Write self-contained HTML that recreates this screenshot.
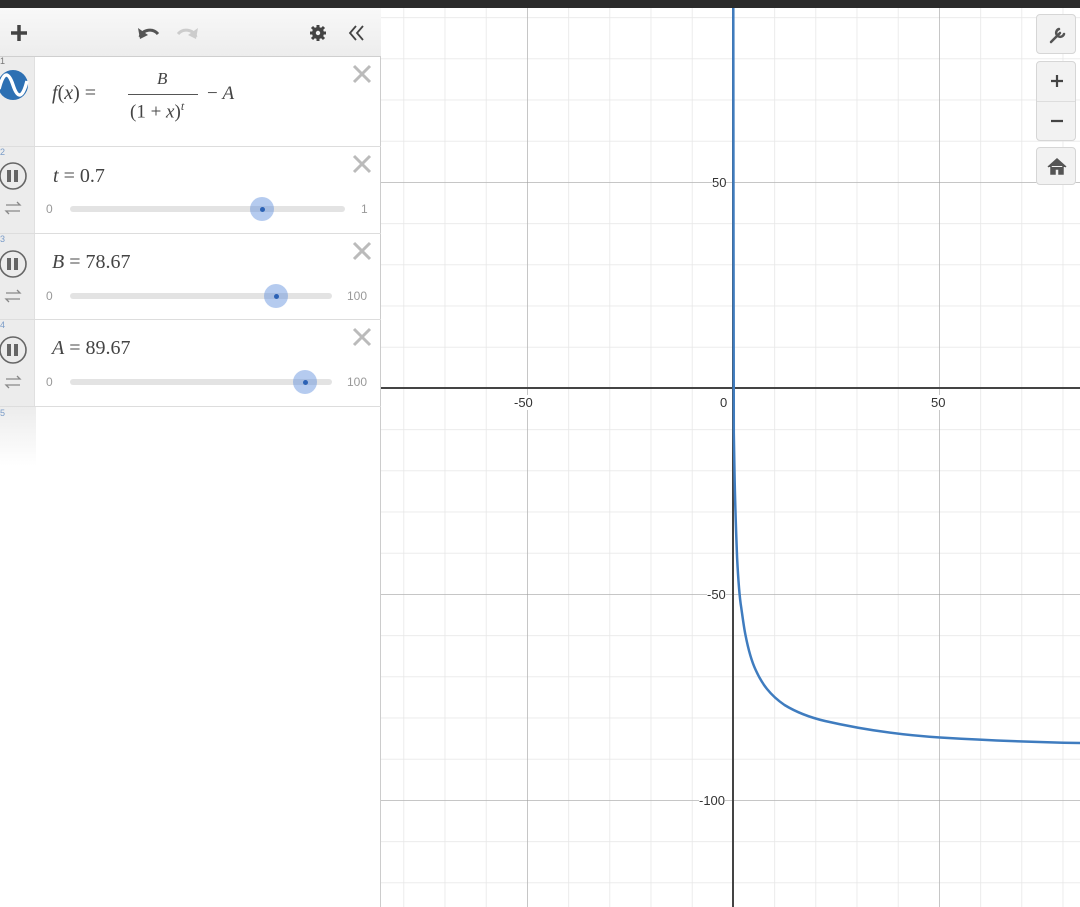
<!DOCTYPE html>
<html><head><meta charset="utf-8"><style>
*{margin:0;padding:0;box-sizing:border-box}
body{width:1080px;height:907px;overflow:hidden;background:#fff;font-family:"Liberation Sans",sans-serif;position:relative}
.top{position:absolute;left:0;top:0;width:1080px;height:8px;background:#2b2b2b}
.panel{position:absolute;left:0;top:8px;width:381px;height:899px;background:#fff;border-right:1px solid #ccc}
.tb{position:absolute;left:0;top:0;width:381px;height:49px;background:linear-gradient(#f8f8f8,#ededed);border-bottom:1px solid #cfcfcf}
.gut{position:absolute;left:0;width:35px;background:#ececec;border-right:1px solid #e0e0e0}
.row{position:absolute;left:0;width:381px;border-bottom:1px solid #ddd}
.math{position:absolute;font-family:"Liberation Serif",serif;font-size:20px;color:#444}
.x{position:absolute;right:8px;top:6px}
.lab{position:absolute;font-size:12px;color:#999}
.track{position:absolute;height:6px;background:#e3e3e3;border-radius:3px}
.knob{position:absolute;width:24px;height:24px;border-radius:50%;background:rgba(90,140,220,.45)}
.knob:after{content:"";position:absolute;left:9.5px;top:9.5px;width:5px;height:5px;border-radius:50%;background:#2c62b5}
.num{position:absolute;left:0;font-size:9px;color:#7a9cc8}
.btn{position:absolute;left:1036px;width:40px;background:#f2f2f2;border:1px solid #d6d6d6;border-radius:4px}
.gl{position:absolute;font-size:13px;color:#333;background:#fff}
</style></head><body>
<svg style="position:absolute;left:0;top:0" width="1080" height="907">
<defs>
<pattern id="mn" patternUnits="userSpaceOnUse" x="733" y="388" width="41.2" height="41.2"><path d="M0 0V41.2M0 0H41.2" stroke="#e6e6e6" stroke-width="1.5" fill="none"/></pattern>
<pattern id="mj" patternUnits="userSpaceOnUse" x="733" y="388" width="206" height="206"><path d="M0 0V206M0 0H206" stroke="#9a9a9a" stroke-width="1" fill="none"/></pattern>
</defs>
<rect x="381" y="8" width="699" height="899" fill="url(#mn)"/>
<rect x="381" y="8" width="699" height="899" fill="url(#mj)"/>
<line x1="381" y1="388" x2="1080" y2="388" stroke="#444" stroke-width="2"/>
<line x1="733" y1="8" x2="733" y2="907" stroke="#444" stroke-width="2"/>
<path d="M733.3 8 L733.5 230 L733.8 433 L734.5 472 C735 500 736 530 737.1 557.9 C738.5 585 740 600 741.2 607.3 C743 620 744 628 745.4 634.6 C748 648 751 660 755.7 670 C762 684 770 695 784.5 705 C796 712 808 717 825 721 C860 729 900 735 940 737.5 C980 740 1030 742 1083 743.1" fill="none" stroke="#3f7cbf" stroke-width="2.5" stroke-linejoin="round"/>
</svg>
<div class="gl" style="left:712px;top:175px">50</div>
<div class="gl" style="left:514px;top:395px">-50</div>
<div class="gl" style="left:720px;top:395px">0</div>
<div class="gl" style="left:931px;top:395px">50</div>
<div class="gl" style="left:707px;top:587px">-50</div>
<div class="gl" style="left:699px;top:793px">-100</div>
<div class="btn" style="top:14px;height:40px"><svg width="40" height="40"><path d="M14 27 L23 18 M22 14a4 4 0 1 0 5 5" stroke="#555" stroke-width="2.5" fill="none" stroke-linecap="round"/></svg></div>
<div class="btn" style="top:61px;height:80px"><div style="position:absolute;left:0;top:39px;width:38px;height:1px;background:#ddd"></div>
<svg width="40" height="80"><path d="M14 19H26M20 13V25M14 59H26" stroke="#444" stroke-width="2.2"/></svg></div>
<div class="btn" style="top:147px;height:38px"><svg width="40" height="38"><path d="M11 19 L20 11 L29 19 M14 18V26H18V21H22V26H26V18" fill="#555" stroke="#555" stroke-width="1.5"/></svg></div>
<div class="top"></div>
<div class="panel">
<div class="tb">
<svg width="381" height="49"><path d="M11 25H27M19 17V33" stroke="#444" stroke-width="3.5"/>
<path d="M140 29 C143 21 153 20 158 26" stroke="#555" stroke-width="3" fill="none"/><path d="M138 20 L140 31 L148 27Z" fill="#555"/>
<path d="M196 29 C193 21 183 20 178 26" stroke="#ccc" stroke-width="3" fill="none"/><path d="M198 20 L196 31 L188 27Z" fill="#ccc"/>
<circle cx="318" cy="25" r="6" fill="#444"/><path d="M318 17V33M310 25H326M312 19L324 31M324 19L312 31" stroke="#444" stroke-width="3"/><circle cx="318" cy="25" r="2.2" fill="#f1f1f1"/>
<path d="M356 18L350 25L356 32M363 18L357 25L363 32" stroke="#444" stroke-width="1.8" fill="none"/></svg>
</div>
<div class="gut" style="top:49px;height:349px"></div>
<div style="position:absolute;left:0;top:398px;width:36px;height:60px;background:linear-gradient(#ececec,#fff)"></div>
<div class="row" style="top:49px;height:90px">
<span class="num" style="top:-1px;color:#777">1</span>
<svg style="position:absolute;left:-2px;top:12px" width="32" height="32"><circle cx="15" cy="16" r="15" fill="#2d70b3"/><path d="M1 20 C6 0 11 4 15 16 S24 32 29 12" stroke="#fff" stroke-width="3.5" fill="none"/></svg>
<div class="math" style="left:52px;top:25px;font-style:italic">f<span style="font-style:normal">(</span>x<span style="font-style:normal">)</span> <span style="font-style:normal">=</span></div>
<div class="math" style="left:157px;top:12px;font-size:17px;font-style:italic">B</div>
<div style="position:absolute;left:128px;top:37px;width:70px;height:1px;background:#555"></div>
<div class="math" style="left:130px;top:42px;font-size:19px">(1 + <i>x</i>)<sup style="font-size:12px"><i>t</i></sup></div>
<div class="math" style="left:207px;top:26px;font-size:19px">− <i>A</i></div>
<svg class="x" width="22" height="22"><path d="M3 3L19 19M19 3L3 19" stroke="#bbb" stroke-width="3"/></svg>
</div>
<div class="row" style="top:139px;height:87px">
<span class="num">2</span>
<svg style="position:absolute;left:-2px;top:14px" width="32" height="60"><circle cx="15" cy="15" r="13" fill="none" stroke="#666" stroke-width="1.6"/><rect x="9" y="9" width="4" height="12" fill="#666"/><rect x="16" y="9" width="4" height="12" fill="#666"/><path d="M8 44H22L19 41M22 50H8L11 53" stroke="#888" stroke-width="1.3" fill="none"/></svg>
<div class="math" style="left:53px;top:18px"><i>t</i> = 0.7</div>
<svg class="x" width="22" height="22"><path d="M3 3L19 19M19 3L3 19" stroke="#bbb" stroke-width="3"/></svg>
<span class="lab" style="left:46px;top:55px">0</span><span class="lab" style="left:361px;top:55px">1</span>
<div class="track" style="left:70px;top:59px;width:275px"></div>
<div class="knob" style="left:250px;top:50px"></div>
</div>
<div class="row" style="top:226px;height:86px">
<span class="num">3</span>
<svg style="position:absolute;left:-2px;top:15px" width="32" height="60"><circle cx="15" cy="15" r="13" fill="none" stroke="#666" stroke-width="1.6"/><rect x="9" y="9" width="4" height="12" fill="#666"/><rect x="16" y="9" width="4" height="12" fill="#666"/><path d="M8 44H22L19 41M22 50H8L11 53" stroke="#888" stroke-width="1.3" fill="none"/></svg>
<div class="math" style="left:52px;top:17px"><i>B</i> = 78.67</div>
<svg class="x" width="22" height="22"><path d="M3 3L19 19M19 3L3 19" stroke="#bbb" stroke-width="3"/></svg>
<span class="lab" style="left:46px;top:55px">0</span><span class="lab" style="left:347px;top:55px">100</span>
<div class="track" style="left:70px;top:59px;width:262px"></div>
<div class="knob" style="left:264px;top:50px"></div>
</div>
<div class="row" style="top:312px;height:87px">
<span class="num">4</span>
<svg style="position:absolute;left:-2px;top:15px" width="32" height="60"><circle cx="15" cy="15" r="13" fill="none" stroke="#666" stroke-width="1.6"/><rect x="9" y="9" width="4" height="12" fill="#666"/><rect x="16" y="9" width="4" height="12" fill="#666"/><path d="M8 44H22L19 41M22 50H8L11 53" stroke="#888" stroke-width="1.3" fill="none"/></svg>
<div class="math" style="left:52px;top:17px"><i>A</i> = 89.67</div>
<svg class="x" width="22" height="22"><path d="M3 3L19 19M19 3L3 19" stroke="#bbb" stroke-width="3"/></svg>
<span class="lab" style="left:46px;top:55px">0</span><span class="lab" style="left:347px;top:55px">100</span>
<div class="track" style="left:70px;top:59px;width:262px"></div>
<div class="knob" style="left:293px;top:50px"></div>
</div>
<span class="num" style="top:400px">5</span>
</div>
</body></html>
